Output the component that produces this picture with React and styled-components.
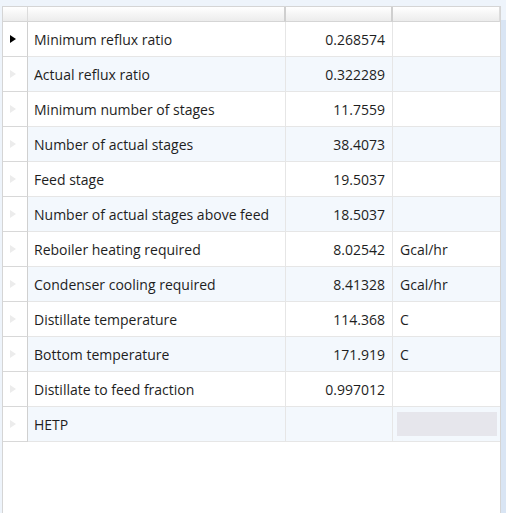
import React from 'react';
import styled, { createGlobalStyle } from 'styled-components';

const GlobalStyle = createGlobalStyle`
  html, body {
    margin: 0;
    padding: 0;
    background: #eef4fb;
  }
  body {
    font-family: "Segoe UI", "Open Sans", "Noto Sans", sans-serif;
  }
`;

const rows = [
  { name: 'Minimum reflux ratio', value: '0.268574', unit: '' },
  { name: 'Actual reflux ratio', value: '0.322289', unit: '' },
  { name: 'Minimum number of stages', value: '11.7559', unit: '' },
  { name: 'Number of actual stages', value: '38.4073', unit: '' },
  { name: 'Feed stage', value: '19.5037', unit: '' },
  { name: 'Number of actual stages above feed', value: '18.5037', unit: '' },
  { name: 'Reboiler heating required', value: '8.02542', unit: 'Gcal/hr' },
  { name: 'Condenser cooling required', value: '8.41328', unit: 'Gcal/hr' },
  { name: 'Distillate temperature', value: '114.368', unit: 'C' },
  { name: 'Bottom temperature', value: '171.919', unit: 'C' },
  { name: 'Distillate to feed fraction', value: '0.997012', unit: '' },
  { name: 'HETP', value: '', unit: '', empty: true },
];

// Page frame with the blue strip on the right
const Page = styled.div`
  display: flex;
  width: 506px;
  height: 513px;
  padding-top: 6px;
  box-sizing: border-box;
  background: #eef4fb;
`;

const Spacer = styled.div`
  width: 2px;
  flex: none;
`;

const RightStrip = styled.div`
  flex: 1;
  margin-top: 14px;
  background: #d9e5f4;
`;

// The grid itself
const Grid = styled.div`
  width: 499px;
  flex: none;
  background: #ffffff;
  border: 1px solid #d5d5d5;
  border-bottom: none;
  box-sizing: border-box;
  display: grid;
  grid-template-columns: 25px 258px 107px 107px;
  grid-auto-rows: 35px;
  grid-template-rows: 15px;
  align-content: start;
`;

const HeaderCell = styled.div`
  background: linear-gradient(#ffffff, #ececec);
  border-right: ${p => (p.$grip ? '2px solid #cfcfcf' : '1px solid #dcdcdc')};
  border-bottom: 1px solid #d5d5d5;
  box-sizing: border-box;
`;

const RowHeader = styled.div`
  background: #ffffff;
  border-right: 1px solid #d0d0d0;
  border-bottom: 1px solid #d8d8d8;
  box-sizing: border-box;
  display: flex;
  align-items: center;
  padding-left: 6px;
`;

const Cell = styled.div`
  background: ${p => (p.$alt ? '#f3f8fd' : '#ffffff')};
  border-right: ${p => (p.$last ? 'none' : '1px solid #e6e6e6')};
  border-bottom: 1px solid #e6e6e6;
  box-sizing: border-box;
  display: flex;
  align-items: center;
  justify-content: ${p => (p.$right ? 'flex-end' : 'flex-start')};
  padding: ${p => (p.$right ? '0 7px 0 0' : p.$last ? '0 0 0 7px' : '0 10px 0 6px')};
  font-size: 14px;
  color: #1e1e1e;
  white-space: nowrap;
  overflow: hidden;
`;

const CellText = styled.span`
  overflow: hidden;
  white-space: nowrap;
`;

const Placeholder = styled.div`
  width: 100px;
  height: 24px;
  margin-left: -3px;
  background: #e6e6ec;
`;

const Arrow = ({ active }) => (
  <svg width="8" height="10" viewBox="0 0 8 10">
    <path d="M1 1 L7 5 L1 9 Z" fill={active ? '#000000' : '#ececec'} />
  </svg>
);

const App = () => (
  <>
    <GlobalStyle />
    <Page>
      <Spacer />
      <Grid>
        <HeaderCell />
        <HeaderCell $grip />
        <HeaderCell $grip />
        <HeaderCell />
        {rows.map((r, i) => {
          const alt = i % 2 === 1;
          return (
            <React.Fragment key={r.name}>
              <RowHeader>
                <Arrow active={i === 0} />
              </RowHeader>
              <Cell $alt={alt}>
                <CellText>{r.name}</CellText>
              </Cell>
              <Cell $alt={alt} $right>{r.value}</Cell>
              <Cell $alt={alt} $last>
                {r.empty ? <Placeholder /> : r.unit}
              </Cell>
            </React.Fragment>
          );
        })}
      </Grid>
      <RightStrip />
    </Page>
  </>
);

export default App;
